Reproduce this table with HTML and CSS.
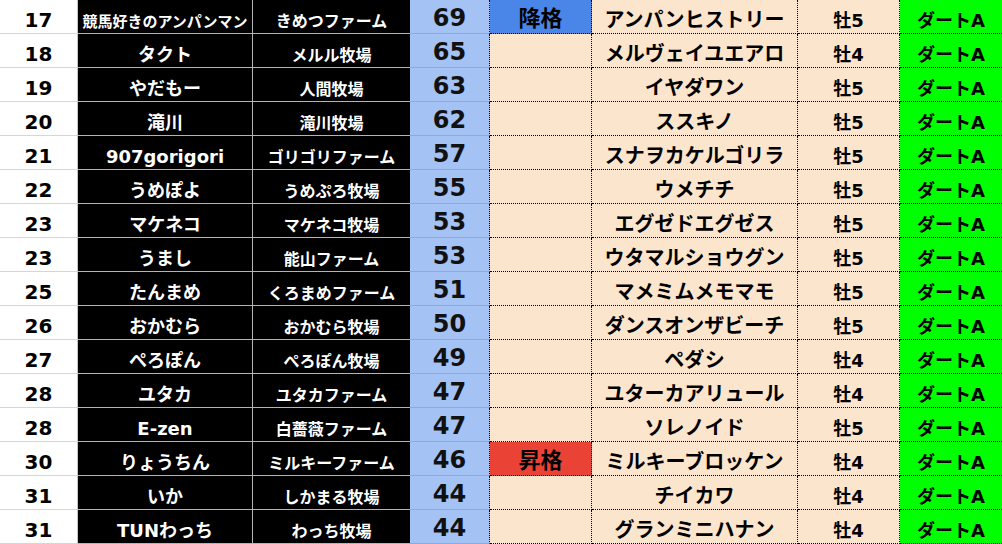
FILE: index.html
```html
<!DOCTYPE html>
<html lang="ja">
<head>
<meta charset="utf-8">
<link rel="stylesheet" href="styles.css">
</head>
<body>
<div class="sheet">
  <div class="row"><div class="c rank">17</div><div class="c name small">競馬好きのアンパンマン</div><div class="c farm">きめつファーム</div><div class="c score">69</div><div class="c badge down">降格</div><div class="c horse">アンパンヒストリー</div><div class="c sex">牡5</div><div class="c dirt">ダートA</div></div>
  <div class="row"><div class="c rank">18</div><div class="c name">タクト</div><div class="c farm">メルル牧場</div><div class="c score">65</div><div class="c badge"></div><div class="c horse">メルヴェイユエアロ</div><div class="c sex">牡4</div><div class="c dirt">ダートA</div></div>
  <div class="row"><div class="c rank">19</div><div class="c name">やだもー</div><div class="c farm">人間牧場</div><div class="c score">63</div><div class="c badge"></div><div class="c horse">イヤダワン</div><div class="c sex">牡5</div><div class="c dirt">ダートA</div></div>
  <div class="row"><div class="c rank">20</div><div class="c name">滝川</div><div class="c farm">滝川牧場</div><div class="c score">62</div><div class="c badge"></div><div class="c horse">ススキノ</div><div class="c sex">牡5</div><div class="c dirt">ダートA</div></div>
  <div class="row"><div class="c rank">21</div><div class="c name">907gorigori</div><div class="c farm">ゴリゴリファーム</div><div class="c score">57</div><div class="c badge"></div><div class="c horse">スナヲカケルゴリラ</div><div class="c sex">牡5</div><div class="c dirt">ダートA</div></div>
  <div class="row"><div class="c rank">22</div><div class="c name">うめぽよ</div><div class="c farm">うめぷろ牧場</div><div class="c score">55</div><div class="c badge"></div><div class="c horse">ウメチチ</div><div class="c sex">牡5</div><div class="c dirt">ダートA</div></div>
  <div class="row"><div class="c rank">23</div><div class="c name">マケネコ</div><div class="c farm">マケネコ牧場</div><div class="c score">53</div><div class="c badge"></div><div class="c horse">エグゼドエグゼス</div><div class="c sex">牡5</div><div class="c dirt">ダートA</div></div>
  <div class="row"><div class="c rank">23</div><div class="c name">うまし</div><div class="c farm">能山ファーム</div><div class="c score">53</div><div class="c badge"></div><div class="c horse">ウタマルショウグン</div><div class="c sex">牡5</div><div class="c dirt">ダートA</div></div>
  <div class="row"><div class="c rank">25</div><div class="c name">たんまめ</div><div class="c farm">くろまめファーム</div><div class="c score">51</div><div class="c badge"></div><div class="c horse">マメミムメモマモ</div><div class="c sex">牡5</div><div class="c dirt">ダートA</div></div>
  <div class="row"><div class="c rank">26</div><div class="c name">おかむら</div><div class="c farm">おかむら牧場</div><div class="c score">50</div><div class="c badge"></div><div class="c horse">ダンスオンザビーチ</div><div class="c sex">牡5</div><div class="c dirt">ダートA</div></div>
  <div class="row"><div class="c rank">27</div><div class="c name">ぺろぽん</div><div class="c farm">ぺろぽん牧場</div><div class="c score">49</div><div class="c badge"></div><div class="c horse">ペダシ</div><div class="c sex">牡4</div><div class="c dirt">ダートA</div></div>
  <div class="row"><div class="c rank">28</div><div class="c name">ユタカ</div><div class="c farm">ユタカファーム</div><div class="c score">47</div><div class="c badge"></div><div class="c horse">ユターカアリュール</div><div class="c sex">牡4</div><div class="c dirt">ダートA</div></div>
  <div class="row"><div class="c rank">28</div><div class="c name">E-zen</div><div class="c farm">白薔薇ファーム</div><div class="c score">47</div><div class="c badge"></div><div class="c horse">ソレノイド</div><div class="c sex">牡5</div><div class="c dirt">ダートA</div></div>
  <div class="row"><div class="c rank">30</div><div class="c name">りょうちん</div><div class="c farm">ミルキーファーム</div><div class="c score">46</div><div class="c badge up">昇格</div><div class="c horse">ミルキーブロッケン</div><div class="c sex">牡4</div><div class="c dirt">ダートA</div></div>
  <div class="row"><div class="c rank">31</div><div class="c name">いか</div><div class="c farm">しかまる牧場</div><div class="c score">44</div><div class="c badge"></div><div class="c horse">チイカワ</div><div class="c sex">牡4</div><div class="c dirt">ダートA</div></div>
  <div class="row"><div class="c rank">31</div><div class="c name">TUNわっち</div><div class="c farm">わっち牧場</div><div class="c score">44</div><div class="c badge"></div><div class="c horse">グランミニハナン</div><div class="c sex">牡4</div><div class="c dirt">ダートA</div></div>
</div>
</body>
</html>
```
FILE: styles.css
```css
html, body {
  margin: 0;
  padding: 0;
  background: #ffffff;
}

.sheet {
  display: grid;
  grid-template-columns: 78px 175px 157px 80px 102px 206px 102px 102px;
  grid-auto-rows: 34px;
  width: 1002px;
  font-family: "DejaVu Sans", "Noto Sans CJK JP", sans-serif;
  font-weight: bold;
}

.row {
  display: contents;
}

.c {
  box-sizing: border-box;
  display: flex;
  align-items: flex-end;
  justify-content: center;
  padding-bottom: 3px;
  line-height: 1;
  white-space: nowrap;
  overflow: hidden;
  color: #000;
}

.rank {
  background: #ffffff;
  font-size: 20px;
  border-right: 1px solid #c4c4c4;
  border-bottom: 1px solid #d6d6d6;
}

.name {
  background: #000;
  color: #fff;
  font-size: 18px;
  border-right: 1px solid #b4b4b4;
  border-bottom: 1px solid #b4b4b4;
}

.name.small {
  font-size: 15px;
}

.farm {
  background: #000;
  color: #fff;
  font-size: 16px;
  border-bottom: 1px solid #b4b4b4;
}

.score {
  background: #a4c2f4;
  color: #111;
  font-size: 24px;
  border-bottom: 1px solid #8eaad9;
  border-right: 1px dotted #000;
}

.badge,
.horse,
.sex {
  background: #fce5cd;
  border-right: 1px dotted #000;
  border-bottom: 1px dotted #000;
}

.badge {
  font-size: 22px;
}

.badge.down {
  background: #4a86e8;
}

.badge.up {
  background: #ea4335;
}

.horse {
  font-size: 20px;
}

.sex {
  font-size: 18px;
}

.dirt {
  background: #00ff00;
  font-size: 18px;
  border-bottom: 1px dotted #000;
}
```
